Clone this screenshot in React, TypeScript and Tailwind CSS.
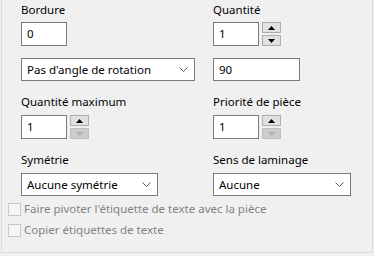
const font = { fontFamily: '"Segoe UI", "Noto Sans", sans-serif' };

const Label = (props: { text: string }) => (
	<div className="h-[16px] text-[11.5px] leading-[16px] text-black">{props.text}</div>
);

const TextBox = (props: { value: string; w: string; h?: string }) => (
	<div
		className={`${props.w} ${props.h ?? "h-[24px]"} bg-white border border-[#7a7a7a] pl-[5px] text-[11.5px] leading-[20px] text-black flex items-center`}
	>
		{props.value}
	</div>
);

const Arrow = (props: { up: boolean; disabled?: boolean }) => (
	<svg width="7" height="4" viewBox="0 0 7 4">
		{props.up ? (
			<path d="M3.5 0 L7 4 L0 4 Z" fill={props.disabled ? "#a3a3a3" : "#000"} />
		) : (
			<path d="M0 0 L7 0 L3.5 4 Z" fill={props.disabled ? "#b0b0b0" : "#000"} />
		)}
	</svg>
);

const SpinBtn = (props: { up: boolean; disabled?: boolean }) => (
	<div
		className={`w-[19px] h-[11px] flex items-center justify-center border ${
			props.disabled ? "bg-[#cccccc] border-[#bfbfbf]" : "bg-[#e1e1e1] border-[#adadad]"
		}`}
	>
		<Arrow up={props.up} disabled={props.disabled} />
	</div>
);

const Spinner = (props: { value: string; downDisabled?: boolean }) => (
	<div className="flex gap-[3px]">
		<TextBox value={props.value} w="w-[46px]" />
		<div className="flex flex-col gap-[2px]">
			<SpinBtn up />
			<SpinBtn up={false} disabled={props.downDisabled} />
		</div>
	</div>
);

const Combo = (props: { value: string; w: string }) => (
	<div
		className={`${props.w} h-[23px] bg-white border border-[#7a7a7a] pl-[5px] pr-[6px] flex items-center justify-between text-[11.5px] text-black`}
	>
		<span>{props.value}</span>
		<svg width="9" height="5" viewBox="0 0 9 5">
			<path d="M0.5 0.5 L4.5 4.5 L8.5 0.5" stroke="#5a5a5a" strokeWidth="1" fill="none" />
		</svg>
	</div>
);

const Check = (props: { text: string }) => (
	<div className="flex items-center gap-[3px] h-[14px]">
		<div className="w-[13px] h-[13px] border border-[#c8c8c8] bg-[#f5f5f5]" />
		<span className="text-[11.5px] leading-[16px] text-[#838383]">{props.text}</span>
	</div>
);

export default function App() {
	return (
		<div className="w-[374px] h-[256px] bg-[#f0f0f0] overflow-hidden" style={font}>
			<div className="ml-[1px] w-[372px] h-[253px] border-l border-r border-b border-[#dadada] pt-[2px] pl-[19px]">
				<div className="grid grid-cols-[192px_1fr]">
					<div>
						<Label text="Bordure" />
						<div className="mt-[4px]">
							<TextBox value="0" w="w-[46px]" />
						</div>
					</div>
					<div>
						<Label text="Quantité" />
						<div className="mt-[4px]">
							<Spinner value="1" />
						</div>
					</div>
					<div className="mt-[12px]">
						<Combo value="Pas d'angle de rotation" w="w-[174px]" />
					</div>
					<div className="mt-[12px]">
						<TextBox value="90" w="w-[87px]" h="h-[23px]" />
					</div>
					<div className="mt-[13px]">
						<Label text="Quantité maximum" />
						<div className="mt-[5px]">
							<Spinner value="1" downDisabled />
						</div>
					</div>
					<div className="mt-[13px]">
						<Label text="Priorité de pièce" />
						<div className="mt-[5px]">
							<Spinner value="1" downDisabled />
						</div>
					</div>
					<div className="mt-[13px]">
						<Label text="Symétrie" />
						<div className="mt-[5px]">
							<Combo value="Aucune symétrie" w="w-[137px]" />
						</div>
					</div>
					<div className="mt-[13px]">
						<Label text="Sens de laminage" />
						<div className="mt-[5px]">
							<Combo value="Aucune" w="w-[138px]" />
						</div>
					</div>
				</div>
				<div className="-ml-[13px] mt-[6px] flex flex-col gap-[7px]">
					<Check text="Faire pivoter l'étiquette de texte avec la pièce" />
					<Check text="Copier étiquettes de texte" />
				</div>
			</div>
		</div>
	);
}
